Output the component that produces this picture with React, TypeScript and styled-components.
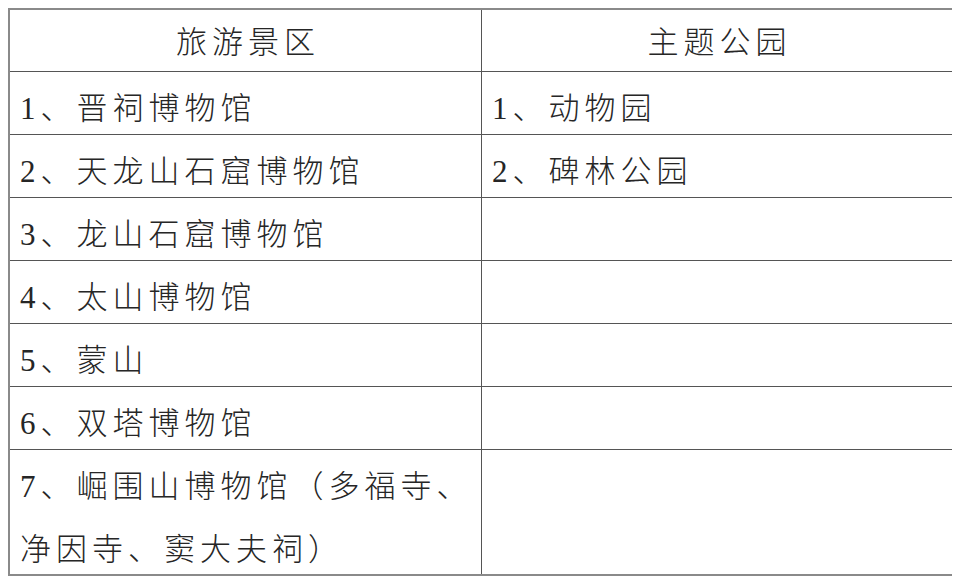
import React from "react";
import styled, { createGlobalStyle } from "styled-components";

const GlobalStyle = createGlobalStyle`
    body {
        margin: 8px;
        background: #fff;
        font-family: "Liberation Serif", "Noto Sans CJK SC", serif;
    }
    * { box-sizing: border-box; }
`

const rows: [string, string][] = [
    ['1、晋祠博物馆', '1、动物园'],
    ['2、天龙山石窟博物馆', '2、碑林公园'],
    ['3、龙山石窟博物馆', ''],
    ['4、太山博物馆', ''],
    ['5、蒙山', ''],
    ['6、双塔博物馆', ''],
    ['7、崛围山博物馆（多福寺、净因寺、窦大夫祠）', ''],
]

export default function App() {
    return (
        <>
            <GlobalStyle />
            <Sheet>
                <HeadCell>旅游景区</HeadCell>
                <HeadCell $last>主题公园</HeadCell>
                {
                    rows.map(([left, right], i) => (
                        <React.Fragment key={i}>
                            <Cell $tall={i === rows.length - 1} $bottom={i === rows.length - 1}>{left}</Cell>
                            <Cell $tall={i === rows.length - 1} $bottom={i === rows.length - 1} $last>{right}</Cell>
                        </React.Fragment>
                    ))
                }
            </Sheet>
        </>
    )
}

const Sheet = styled.div`
    width: 946px;
    display: grid;
    grid-template-columns: 472px 470px;
    border: 2px solid #8a8a8a;
    color: #262626;
    font-size: 31px;
    font-weight: 300;
    letter-spacing: 5px;
`
const Cell = styled.div<{ $last?: boolean; $tall?: boolean; $bottom?: boolean }>`
    height: ${p => p.$tall ? '124px' : '63px'};
    padding: 5px 2px 0 10px;
    line-height: 63px;
    overflow: hidden;
    border-right: ${p => p.$last ? 'none' : '1px solid #555'};
    border-bottom: ${p => p.$bottom ? 'none' : '1px solid #555'};
`
const HeadCell = styled(Cell)`
    height: 62px;
    padding: 4px 0 0 5px;
    line-height: 58px;
    text-align: center;
`
